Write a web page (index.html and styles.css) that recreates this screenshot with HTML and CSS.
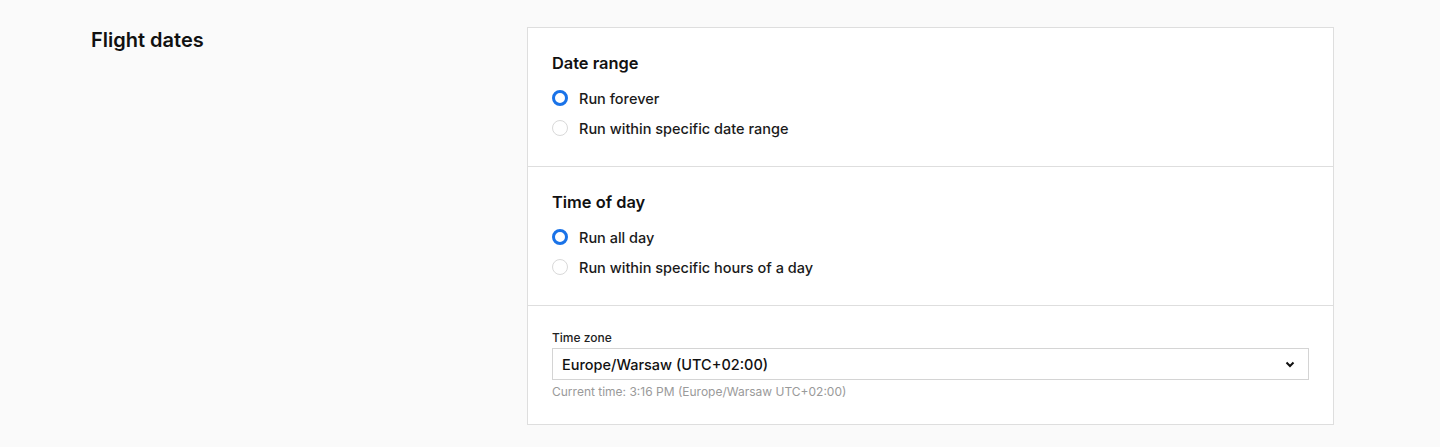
FILE: index.html
```html
<!DOCTYPE html>
<html>
<head>
<meta charset="utf-8">
<link rel="stylesheet" href="styles.css">
</head>
<body>
<div class="page">
  <h2 class="page-title">Flight dates</h2>
  <div class="card">
    <section class="section">
      <h3 class="section-title">Date range</h3>
      <label class="radio-row"><span class="radio checked"></span><span>Run forever</span></label>
      <label class="radio-row"><span class="radio"></span><span>Run within specific date range</span></label>
    </section>
    <section class="section">
      <h3 class="section-title">Time of day</h3>
      <label class="radio-row"><span class="radio checked"></span><span>Run all day</span></label>
      <label class="radio-row"><span class="radio"></span><span>Run within specific hours of a day</span></label>
    </section>
    <section class="section tz">
      <div class="field-label">Time zone</div>
      <div class="select">
        <span>Europe/Warsaw (UTC+02:00)</span>
        <svg class="chev" width="10" height="7" viewBox="0 0 10 7"><path d="M1.5 1.5 L5 5 L8.5 1.5" fill="none" stroke="#111" stroke-width="2"/></svg>
      </div>
      <div class="hint">Current time: 3:16 PM (Europe/Warsaw UTC+02:00)</div>
    </section>
  </div>
</div>
</body>
</html>
```

FILE: styles.css
```css
* { box-sizing: border-box; }
html, body { margin: 0; padding: 0; }
body {
  background: #fafafa;
  font-family: Inter, "Noto Sans", "Liberation Sans", sans-serif;
  color: #1a1a1a;
}
.page {
  display: grid;
  grid-template-columns: 436px 807px;
  padding: 27px 0 0 91px;
}
.page-title {
  margin: 1px 0 0;
  font-size: 20px;
  font-weight: 600;
  line-height: 24px;
  color: #111;
}
.card {
  background: #fff;
  border: 1px solid #dedede;
}
.section {
  padding: 25px 24px 23px;
  border-bottom: 1px solid #dedede;
}
.section:last-child { border-bottom: none; }
.section-title {
  margin: 0 0 10px;
  font-size: 16.4px;
  font-weight: 600;
  line-height: 20px;
  color: #111;
}
.radio-row {
  display: flex;
  align-items: center;
  gap: 11px;
  height: 30px;
  font-size: 14.5px;
  font-weight: 500;
  color: #1a1a1a;
}
.radio {
  width: 16px;
  height: 16px;
  border-radius: 50%;
  border: 1px solid #d9d9d9;
  background: #fff;
  flex: none;
}
.radio.checked {
  border: 3px solid #1a73e8;
}
.tz { padding: 25px 24px 25px; }
.field-label {
  font-size: 12px;
  font-weight: 500;
  line-height: 14px;
  color: #222;
  margin-bottom: 3px;
}
.select {
  height: 32px;
  border: 1px solid #d4d4d4;
  display: flex;
  align-items: center;
  justify-content: space-between;
  padding: 0 13px 0 9px;
  font-size: 14.5px;
  font-weight: 500;
  color: #111;
  background: #fff;
}
.hint {
  margin-top: 5px;
  font-size: 12px;
  line-height: 14px;
  color: #9a9a9a;
}
```
